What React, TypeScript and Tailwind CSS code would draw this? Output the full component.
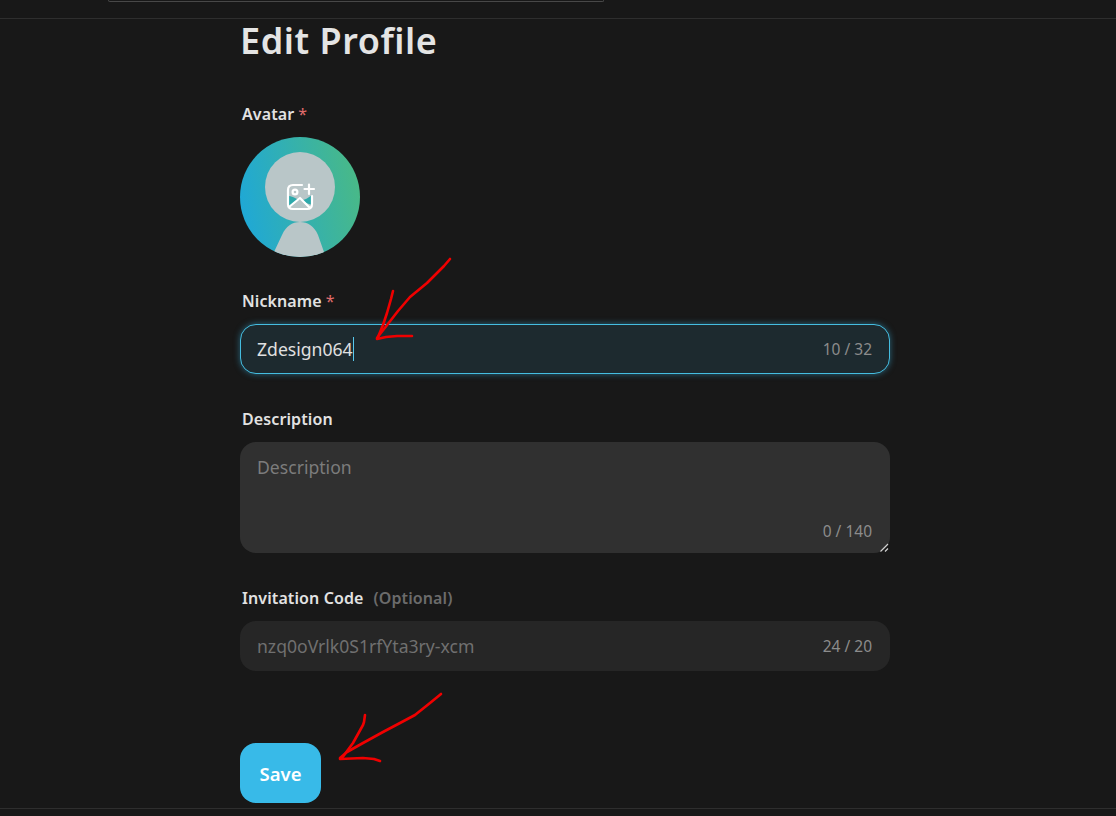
const font = { fontFamily: '"Noto Sans", "Open Sans", sans-serif' };

function Label({ text, required, hint }: { text: string; required?: boolean; hint?: string }) {
  return (
    <div className="mb-3 flex h-[22px] items-center pl-0.5 text-base font-semibold tracking-[0.1px] text-[#e2e2e2]">
      <span>{text}</span>
      {required && <span className="ml-1 font-normal text-[#e06c6c]">*</span>}
      {hint && <span className="ml-2.5 text-[#6b6b6b]">{hint}</span>}
    </div>
  );
}

function Avatar() {
  return (
    <svg width="120" height="120" viewBox="0 0 120 120" className="block">
      <defs>
        <linearGradient id="ring" x1="0" y1="0.6" x2="1" y2="0.4">
          <stop offset="0" stopColor="#1fa8d6" />
          <stop offset="1" stopColor="#49b987" />
        </linearGradient>
        <clipPath id="round">
          <circle cx="60" cy="60" r="60" />
        </clipPath>
      </defs>
      <circle cx="60" cy="60" r="60" fill="url(#ring)" />
      <g clipPath="url(#round)">
        <circle cx="60" cy="50" r="35" fill="#b9c6c8" />
        <path d="M34 115 L42 98 C46 89 52 85 60 85 C68 85 74 89 78 98 L84 115 L84 120 L34 120 Z" fill="#b9c6c8" />
      </g>
      <path d="M49 59 C53 59 57 63 61 63 C65 63 68 61 72 58 L72 68 L66 66 L60 62 L49 69 Z" fill="#2ea9ab" />
      <g fill="none" stroke="#ffffff" strokeWidth="2.2" strokeLinecap="round" strokeLinejoin="round">
        <path d="M62 48 L53 48 C50 48 48 50 48 53 L48 67 C48 70 50 72 53 72 L67 72 C70 72 72 70 72 67 L72 59" />
        <circle cx="55" cy="55" r="2.4" />
        <path d="M64.5 52 L74 52 M69 47.5 L69 57" />
        <path d="M49 70 L60 61 L70 71" />
      </g>
    </svg>
  );
}

export default function App() {
  return (
    <div className="relative h-[816px] w-[1116px] overflow-hidden bg-[#181818]" style={font}>
      <div className="h-[19px] border-b border-[#2e2e2e]">
        <div className="ml-[108px] h-0.5 w-[496px] rounded-b-[10px] border-x border-b border-[#484848]" />
      </div>

      <div className="ml-[240px] h-[789px] w-[650px]">
        <h1 className="mb-[41px] h-[43px] text-[36px] leading-[43px] font-semibold tracking-[0.55px] text-[#e4e4e4]">
          Edit Profile
        </h1>

        <Label text="Avatar" required />
        <Avatar />

        <div className="mt-[33px]">
          <Label text="Nickname" required />
          <div className="flex h-[50px] items-center justify-between rounded-2xl border border-[#45bde0] bg-[#1d2a2f] pr-[17px] pl-4 shadow-[0_0_6px_rgba(56,180,225,0.5)]">
            <span className="flex items-center text-[17.6px] text-[#e0e0e0]">
              Zdesign064
              <span className="h-[24px] w-px bg-[#58c8ec]" />
            </span>
            <span className="pt-px text-[15.5px] text-[#8c8c8c]">10 / 32</span>
          </div>
        </div>

        <div className="mt-[34px]">
          <Label text="Description" />
          <div className="relative h-[111px]">
            <textarea
              placeholder="Description"
              className="block h-[111px] w-full resize-none rounded-2xl bg-[#303030] px-[17px] py-3 text-[17.6px] text-[#e0e0e0] outline-none placeholder:text-[#7c7c7c]"
            />
            <span className="absolute right-[18px] bottom-2.5 text-[15.5px] text-[#8c8c8c]">0 / 140</span>
            <svg width="9" height="9" viewBox="0 0 9 9" className="absolute right-px bottom-px" stroke="#d0d0d0" strokeWidth="1.2">
              <path d="M0.5 8.5 L8 1 M5 8.5 L8 5.5" />
            </svg>
          </div>
        </div>

        <div className="mt-[34px]">
          <Label text="Invitation Code" hint="(Optional)" />
          <div className="flex h-[50px] items-center justify-between rounded-2xl bg-[#262626] pr-[18px] pl-[17px]">
            <span className="text-[17.6px] text-[#707070]">nzq0oVrlk0S1rfYta3ry-xcm</span>
            <span className="pt-px text-[15.5px] text-[#8c8c8c]">24 / 20</span>
          </div>
        </div>

        <button className="mt-[72px] flex h-[60px] w-[81px] items-center justify-center rounded-2xl bg-[#38bae8] pt-0.5 text-[18.5px] font-semibold text-white">
          Save
        </button>
      </div>

      <div className="absolute right-0 bottom-[7px] left-0 h-px bg-[#2e2e2e]" />

      {/* hand drawn arrows on top of the screenshot */}
      <svg width="1116" height="816" className="pointer-events-none absolute top-0 left-0" fill="none" stroke="#f00000" strokeWidth="2.6" strokeLinecap="round" strokeLinejoin="round">
        <path d="M450 259 L444 266 L427 283 L410 297 L398 311 L377 338" />
        <path d="M393 291 L391 299 L387 313 L383 325 L378 337" />
        <path d="M377 339 L386 337 L397 336 L412 336" />
        <path d="M441 694 L430 703 L415 715 L400 723 L383 732 L363 743 L347 752 L340 758" />
        <path d="M365 715 L364 722 L363 725 L353 743 L342 758" />
        <path d="M340 759 L363 758 L374 759 L380 761" />
      </svg>
    </div>
  );
}
